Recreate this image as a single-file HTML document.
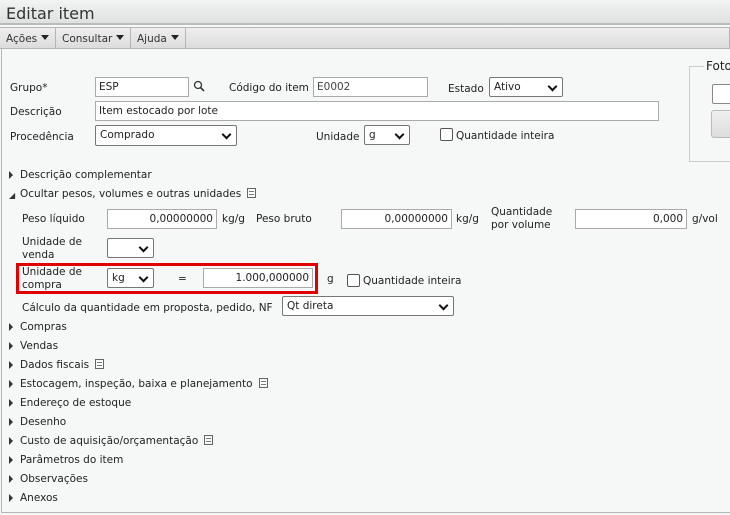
<!DOCTYPE html>
<html><head><meta charset="utf-8"><style>
*{box-sizing:border-box;margin:0;padding:0}
body{width:730px;height:515px;overflow:hidden;background:#f6f7f7;font-family:"DejaVu Sans","Liberation Sans",sans-serif;font-size:10.5px;color:#222;position:relative}
.a{position:absolute;white-space:nowrap;line-height:14px}
.title{position:absolute;left:0;top:0;width:730px;height:25px;background:linear-gradient(#f2f3f3,#dfe0e0);border-bottom:2px solid #b9bcbe;font-size:16px;color:#333;padding:4px 0 0 6px;line-height:20px}
.menu{position:absolute;left:0;top:27px;width:730px;height:22px;background:linear-gradient(#eeeeee,#dcdcdc);border:1px solid #b5b5b5;border-left:none}
.mi{position:absolute;top:0;height:21px;line-height:22px;padding-left:6px;border-right:1px solid #b5b5b5;color:#333}
.tri{display:inline-block;width:0;height:0;border-left:4px solid transparent;border-right:4px solid transparent;border-top:5px solid #222;margin-left:4px;vertical-align:2px}
.content{position:absolute;left:1px;top:49px;width:740px;height:464px;border-left:1px solid #b5b5b5;border-bottom:1px solid #b5b5b5}
.in{position:absolute;background:#fff;border:1px solid #aaa;height:20px;line-height:18px;padding:0 3px;white-space:nowrap;overflow:hidden}
.r{text-align:right}
.sel{position:absolute;background:#fff;border:1px solid #777;border-radius:2px;height:20px;line-height:19px;padding:0 4px;white-space:nowrap}
.sel:after{content:"";position:absolute;right:6px;top:5px;width:5px;height:5px;border-right:2px solid #111;border-bottom:2px solid #111;transform:rotate(45deg)}
.cb{position:absolute;width:13px;height:13px;border:1px solid #555;border-radius:2px;background:#fff}
.exp{position:absolute;left:9px;width:0;height:0;border-top:4px solid transparent;border-bottom:4px solid transparent;border-left:4px solid #333}
.doc{display:inline-block;width:9px;height:10px;border:1px solid #666;margin-left:6px;vertical-align:-1px;background:repeating-linear-gradient(#fff 0 2px,#777 2px 3px);background-clip:content-box;padding:1px}
</style></head><body>
<div class="title">Editar item</div>
<div class="menu">
<div class="mi" style="left:0;width:56px">Ações<span class="tri"></span></div>
<div class="mi" style="left:56px;width:75px">Consultar<span class="tri"></span></div>
<div class="mi" style="left:131px;width:55px">Ajuda<span class="tri"></span></div>
</div>
<div class="content"></div>

<div class="a" style="left:10px;top:81px">Grupo*</div>
<div class="in" style="left:95px;top:77px;width:94px">ESP</div>
<svg class="a" style="left:193px;top:80px" width="12" height="12"><circle cx="5" cy="5" r="3.5" fill="none" stroke="#333" stroke-width="1.3"/><line x1="7.5" y1="7.5" x2="11" y2="11" stroke="#333" stroke-width="1.6"/></svg>
<div class="a" style="left:229px;top:81px">Código do item</div>
<div class="in" style="left:313px;top:77px;width:115px;color:#444">E0002</div>
<div class="a" style="left:448px;top:82px">Estado</div>
<div class="sel" style="left:489px;top:77px;width:74px">Ativo</div>
<div class="a" style="left:10px;top:105px">Descrição</div>
<div class="in" style="left:95px;top:101px;width:564px">Item estocado por lote</div>
<div class="a" style="left:10px;top:130px">Procedência</div>
<div class="sel" style="left:95px;top:125px;width:142px;height:21px">Comprado</div>
<div class="a" style="left:316px;top:130px">Unidade</div>
<div class="sel" style="left:364px;top:125px;width:46px">g</div>
<div class="cb" style="left:440px;top:128px"></div>
<div class="a" style="left:456px;top:129px">Quantidade inteira</div>
<div style="position:absolute;left:689px;top:66px;width:60px;height:96px;border:1px solid #ccc;border-right:none"></div>
<div class="a" style="left:704px;top:59px;background:#f6f7f7;padding:0 2px;font-size:12px">Foto</div>
<div style="position:absolute;left:712px;top:84px;width:30px;height:20px;border:1px solid #888;background:#fff;border-radius:2px"></div>
<div style="position:absolute;left:711px;top:110px;width:30px;height:28px;border:1px solid #bbb;background:linear-gradient(#f0f0f0,#dcdcdc);border-radius:3px"></div>

<div class="exp" style="top:171px"></div>
<div class="a" style="left:20px;top:168px">Descrição complementar</div>
<div class="a" style="left:9px;top:189px;font-size:8px;color:#333">◢</div>
<div class="a" style="left:20px;top:187px">Ocultar pesos, volumes e outras unidades<span class="doc"></span></div>

<div class="a" style="left:22px;top:212px">Peso líquido</div>
<div class="in r" style="left:107px;top:209px;width:110px">0,00000000</div>
<div class="a" style="left:222px;top:212px">kg/g</div>
<div class="a" style="left:256px;top:212px">Peso bruto</div>
<div class="in r" style="left:341px;top:209px;width:111px">0,00000000</div>
<div class="a" style="left:456px;top:212px">kg/g</div>
<div class="a" style="left:491px;top:206px;line-height:13px">Quantidade<br>por volume</div>
<div class="in r" style="left:575px;top:209px;width:112px">0,000</div>
<div class="a" style="left:692px;top:212px">g/vol</div>

<div class="a" style="left:22px;top:236px;line-height:13px">Unidade de<br>venda</div>
<div class="sel" style="left:107px;top:238px;width:47px"></div>
<div style="position:absolute;left:16px;top:263px;width:302px;height:31px;border:3px solid #e00000"></div>
<div class="a" style="left:22px;top:266px;line-height:13px">Unidade de<br>compra</div>
<div class="sel" style="left:107px;top:268px;width:47px">kg</div>
<div class="a" style="left:178px;top:272px">=</div>
<div class="in r" style="left:203px;top:268px;width:110px">1.000,000000</div>
<div class="a" style="left:327px;top:272px">g</div>
<div class="cb" style="left:347px;top:274px"></div>
<div class="a" style="left:363px;top:274px">Quantidade inteira</div>
<div class="a" style="left:22px;top:301px">Cálculo da quantidade em proposta, pedido, NF</div>
<div class="sel" style="left:282px;top:296px;width:172px">Qt direta</div>

<div class="exp" style="top:323px"></div><div class="a" style="left:20px;top:320px">Compras</div>
<div class="exp" style="top:342px"></div><div class="a" style="left:20px;top:339px">Vendas</div>
<div class="exp" style="top:361px"></div><div class="a" style="left:20px;top:358px">Dados fiscais<span class="doc"></span></div>
<div class="exp" style="top:380px"></div><div class="a" style="left:20px;top:377px">Estocagem, inspeção, baixa e planejamento<span class="doc"></span></div>
<div class="exp" style="top:399px"></div><div class="a" style="left:20px;top:396px">Endereço de estoque</div>
<div class="exp" style="top:418px"></div><div class="a" style="left:20px;top:415px">Desenho</div>
<div class="exp" style="top:437px"></div><div class="a" style="left:20px;top:434px">Custo de aquisição/orçamentação<span class="doc"></span></div>
<div class="exp" style="top:456px"></div><div class="a" style="left:20px;top:453px">Parâmetros do item</div>
<div class="exp" style="top:475px"></div><div class="a" style="left:20px;top:472px">Observações</div>
<div class="exp" style="top:494px"></div><div class="a" style="left:20px;top:491px">Anexos</div>
</body></html>
